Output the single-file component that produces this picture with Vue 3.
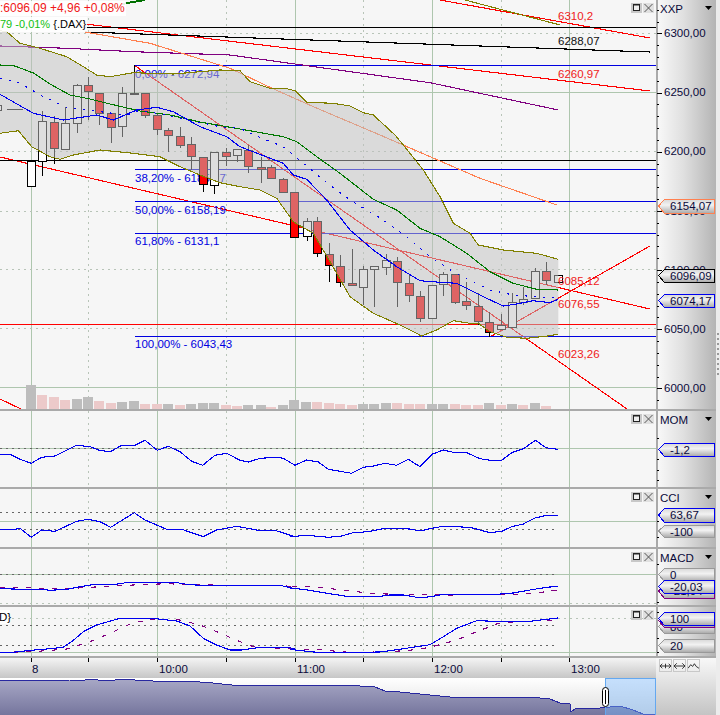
<script setup>
// crop coordinates were read at 3x, this puts them back to page pixels
function crop(ox, oy, vals) {
  const out = [];
  for (let i = 0; i < vals.length; i += 2) {
    out.push([ox + vals[i] / 3, oy + vals[i + 1] / 3]);
  }
  return out;
}
const pts = (list) => list.map((p) => p[0].toFixed(1) + ',' + p[1].toFixed(1)).join(' ');

const majorX = [31, 157, 295, 432, 569];
const minorX = [88, 226, 363, 501];

// x, body top, body bottom, wick top, wick bottom, white?
const candles = [
  [-3, 105, 110, 105, 110, 1],
  [31, 161, 186, 161, 186, 1], [42, 121, 161, 111, 176, 1], [54, 122, 148, 116, 164, 0], [65, 123, 149, 107, 149, 1],
  [77, 85, 123, 84, 133, 1], [88, 85, 91, 77, 120, 0], [99, 93, 113, 93, 125, 0], [111, 113, 127, 113, 143, 0],
  [122, 93, 126, 87, 137, 1], [134, 93, 94, 65, 94, 1], [145, 93, 115, 93, 118, 0], [157, 115, 129, 114, 135, 0],
  [168, 130, 135, 128, 152, 0], [180, 136, 145, 127, 148, 0], [191, 144, 156, 137, 170, 0], [203, 157, 184, 157, 192, 0],
  [214, 152, 185, 152, 194, 1], [226, 152, 156, 148, 166, 0], [237, 149, 155, 149, 162, 1], [248, 150, 166, 145, 173, 0],
  [261, 167, 169, 157, 183, 0], [271, 167, 178, 165, 178, 0], [283, 179, 192, 178, 193, 0], [294, 192, 237, 192, 238, 0],
  [307, 221, 236, 218, 241, 1], [317, 221, 253, 217, 257, 0], [329, 254, 265, 243, 282, 0], [340, 266, 282, 255, 287, 0],
  [352, 283, 285, 249, 285, 0], [363, 269, 287, 266, 305, 1], [374, 266, 269, 266, 307, 1], [386, 260, 267, 254, 275, 1],
  [397, 261, 282, 257, 307, 0], [409, 283, 295, 274, 302, 0], [420, 296, 318, 291, 322, 0], [432, 285, 318, 285, 319, 1],
  [443, 274, 284, 272, 296, 1], [455, 274, 302, 274, 304, 0], [466, 301, 305, 282, 310, 0], [478, 306, 321, 293, 325, 0],
  [489, 322, 332, 312, 337, 0], [501, 325, 329, 314, 329, 1], [512, 302, 327, 293, 327, 1], [523, 299, 302, 287, 305, 1],
  [535, 271, 298, 268, 298, 1], [546, 271, 280, 262, 285, 0], [558, 275, 282, 275, 282, 1],
];

// x, top, grey?
const volumes = [
  [31, 385, 1], [42, 395, 0], [54, 397, 0], [65, 400, 0], [77, 399, 1], [88, 397, 1], [99, 401, 0], [111, 403, 0],
  [122, 402, 1], [134, 401, 1], [145, 404, 0], [157, 404, 0], [168, 404, 1], [180, 405, 0], [191, 404, 1], [203, 403, 1],
  [214, 403, 1], [226, 405, 0], [237, 406, 0], [248, 405, 1], [261, 405, 1], [271, 407, 0], [283, 405, 1], [294, 400, 1],
  [306, 402, 1], [317, 402, 0], [329, 403, 0], [340, 404, 0], [352, 405, 0], [363, 404, 1], [374, 404, 1], [386, 403, 1],
  [397, 403, 0], [409, 404, 0], [420, 404, 0], [432, 404, 1], [443, 404, 1], [455, 404, 0], [466, 405, 0], [478, 405, 0],
  [489, 403, 1], [501, 405, 0], [512, 404, 1], [523, 405, 0], [535, 403, 1], [546, 406, 0],
];

const upper = [
  ...crop(0, 0, [0, 92, 20, 95, 60, 130, 120, 145, 200, 170, 250, 200, 290, 225, 330, 230, 400, 218, 520, 222, 660, 210]),
  ...crop(230, 0, [30, 212, 60, 245, 120, 265, 165, 265, 195, 272, 230, 307, 310, 310, 360, 318, 400, 338, 430, 345, 495, 405]),
  ...crop(240, 130, [490, 45, 550, 120, 600, 200, 640, 280, 690, 310]),
  ...crop(470, 230, [25, 45, 100, 60, 200, 70, 265, 88]),
];
const lower = [
  ...crop(0, 0, [0, 400, 55, 392, 95, 440, 150, 470, 180, 478, 220, 465, 300, 450, 400, 460, 480, 470, 540, 500, 600, 525, 660, 548]),
  ...crop(240, 130, [0, 170, 60, 180, 110, 205, 160, 275, 220, 310, 270, 395, 330, 500, 400, 550, 480, 585, 545, 618, 590, 600, 640, 572, 690, 580]),
  ...crop(470, 230, [25, 280, 60, 305, 110, 322, 170, 325, 240, 317, 265, 312]),
];
const bandFill = pts([...upper, ...lower.slice().reverse()]);

const greenLine = [
  ...crop(0, 0, [0, 195, 45, 198, 100, 219, 150, 252, 210, 285, 270, 297, 330, 312, 420, 333, 510, 345, 600, 366, 720, 387]),
  ...crop(240, 130, [130, 20, 170, 35, 230, 80, 300, 130, 400, 208, 470, 240, 540, 295, 600, 320, 680, 370]),
  ...crop(470, 230, [60, 125, 130, 160, 200, 178, 265, 180]),
];
const blueLine = [
  ...crop(0, 0, [0, 283, 100, 340, 190, 360, 290, 345, 340, 360, 410, 330, 470, 322, 520, 335, 600, 380, 680, 410, 720, 440]),
  ...crop(240, 130, [130, 100, 160, 135, 200, 148, 260, 210, 330, 300, 400, 360, 470, 410, 540, 452, 600, 457, 650, 460]),
  ...crop(470, 230, [50, 205, 100, 228, 140, 222, 190, 212, 240, 218, 265, 208]),
];
const blueDots = [
  ...crop(0, 0, [0, 234, 60, 249, 120, 285, 200, 322, 300, 335, 380, 345, 420, 330, 520, 350, 660, 380, 720, 385]),
  ...crop(240, 130, [30, 10, 130, 50, 190, 100, 250, 150, 330, 210, 430, 270, 500, 320, 570, 380, 640, 425]),
  ...crop(470, 230, [0, 150, 60, 180, 130, 195, 265, 205]),
];
const purpleLine = [
  ...crop(0, 0, [0, 138, 200, 145, 400, 155, 690, 165]),
  ...crop(230, 0, [0, 165, 600, 248, 985, 330]),
];
const orangeLine = [
  ...crop(0, 0, [255, 96, 450, 130]),
  ...crop(230, 0, [0, 205, 120, 262, 250, 320, 450, 405]),
  ...crop(240, 130, [720, 145]),
  [557, 205],
];

const mainLines = [
  { x1: 85, y1: 24, x2: 650, y2: 91, c: '#ff0000' },
  { x1: 0, y1: 157, x2: 650, y2: 309, c: '#ff0000' },
  { x1: 440, y1: 0, x2: 650, y2: 38, c: '#ff0000' },
  { x1: 134, y1: 65, x2: 627, y2: 409, c: '#ff0000' },
  { x1: 490, y1: 337, x2: 650, y2: 246, c: '#ff0000' },
  { x1: 0, y1: 399, x2: 21, y2: 409, c: '#ff0000' },
  { x1: 465, y1: 0, x2: 560, y2: 25, c: '#808000' },
  { x1: 85, y1: 32, x2: 650, y2: 52, c: '#000000' },
  { x1: 85, y1: 27.5, x2: 656, y2: 27.5, c: '#000000' },
  { x1: 0, y1: 160.5, x2: 656, y2: 160.5, c: '#000000' },
  { x1: 0, y1: 324.5, x2: 656, y2: 324.5, c: '#ff0000' },
  { x1: 134, y1: 65.5, x2: 656, y2: 65.5, c: '#0000e0' },
  { x1: 135, y1: 169.5, x2: 656, y2: 169.5, c: '#0000e0' },
  { x1: 135, y1: 201.5, x2: 656, y2: 201.5, c: '#0000e0' },
  { x1: 135, y1: 233.5, x2: 656, y2: 233.5, c: '#0000e0' },
  { x1: 135, y1: 336.5, x2: 656, y2: 336.5, c: '#0000e0' },
];

const fibLabels = [
  { y: 78, text: '0,00% - 6272,94' },
  { y: 182, text: '38,20% - 6185,27' },
  { y: 214, text: '50,00% - 6158,19' },
  { y: 245, text: '61,80% - 6131,1' },
  { y: 348, text: '100,00% - 6043,43' },
];
const lineLabels = [
  { y: 20, text: '6310,2', c: '#f02020' },
  { y: 45, text: '6288,07', c: '#101010' },
  { y: 78, text: '6260,97', c: '#f02020' },
  { y: 285, text: '6085,12', c: '#f02020' },
  { y: 308, text: '6076,55', c: '#f02020' },
  { y: 358, text: '6023,26', c: '#f02020' },
];

const mainTicks = [];
for (let i = 0; i < 34; i++) {
  mainTicks.push({ y: Math.round(9.8 + i * 11.83) + 0.5, major: i % 5 === 2 });
}
const mainPrices = [
  { y: 37, text: '6300,00' }, { y: 96, text: '6250,00' }, { y: 155, text: '6200,00' }, { y: 215, text: '6150,00' },
  { y: 274, text: '6100,00' }, { y: 333, text: '6050,00' }, { y: 392, text: '6000,00' },
];

const momLine = [
  ...crop(0, 380, [0, 223, 30, 223, 60, 238, 94, 250, 125, 232, 165, 228, 230, 196, 270, 200, 295, 210, 330, 216, 365, 196, 405, 196, 435, 181, 472, 211, 505, 199, 540, 215, 575, 244, 608, 256, 645, 226, 680, 220, 720, 241, 745, 246, 780, 235, 830, 232, 850, 235, 885, 256]),
  ...crop(290, 410, [14, 166, 50, 150, 85, 156, 115, 178, 150, 184, 185, 190, 220, 172, 250, 168, 285, 160, 320, 166, 355, 148, 390, 170, 428, 132, 460, 120, 495, 128, 530, 128, 570, 146, 600, 151, 635, 151, 665, 128, 700, 116, 737, 91, 767, 113, 803, 118]),
];
const cciLine = [
  ...crop(0, 480, [0, 148, 45, 148, 60, 145, 94, 172, 125, 150, 165, 154, 230, 124, 265, 118, 300, 125, 332, 142, 403, 98, 435, 120, 500, 148, 545, 148, 610, 170, 650, 150, 710, 139, 775, 151, 825, 151, 885, 170]),
  ...crop(290, 410, [0, 380, 50, 376, 115, 382, 155, 378, 190, 368, 235, 365, 285, 355, 360, 357, 390, 363, 425, 355, 460, 349, 540, 352, 600, 368, 635, 364, 665, 350, 700, 342, 735, 324, 770, 316, 803, 316]),
];
const macdLine = [
  ...crop(0, 480, [0, 326, 78, 328, 120, 328, 150, 331, 200, 328, 240, 320, 285, 313, 340, 314, 385, 307, 525, 307, 560, 313, 600, 316, 840, 316, 880, 325]),
  ...crop(290, 410, [0, 535, 40, 538, 100, 548, 170, 559, 270, 559, 300, 555, 340, 555, 380, 562, 405, 562, 430, 559, 460, 553, 620, 553, 670, 549, 720, 540, 770, 532, 803, 529]),
];
const macdSignal = [
  ...crop(0, 480, [0, 322, 100, 324, 200, 326, 300, 320, 400, 315, 500, 311, 600, 315, 840, 316, 880, 320]),
  ...crop(290, 410, [0, 529, 60, 530, 140, 538, 200, 545, 260, 551, 320, 553, 400, 553, 470, 556, 530, 553, 660, 553, 720, 551, 803, 541]),
];
const stochLine = [
  ...crop(0, 600, [0, 157, 40, 157, 80, 152, 140, 147, 190, 142, 215, 125, 250, 95, 290, 75, 360, 55, 455, 55, 530, 63, 570, 78, 610, 115, 650, 135, 690, 150, 725, 150, 780, 142, 860, 142, 885, 146]),
  ...crop(290, 410, [0, 718, 60, 725, 100, 728, 270, 726, 300, 722, 420, 704, 460, 680, 500, 655, 560, 632, 620, 634, 720, 634, 803, 624]),
];
const stochSignal = [
  ...crop(0, 600, [0, 157, 100, 155, 200, 147, 270, 125, 330, 100, 400, 68, 460, 58, 530, 58, 600, 75, 650, 95, 720, 125, 760, 140, 830, 145, 885, 147]),
  ...crop(290, 410, [0, 717, 80, 718, 150, 725, 200, 728, 350, 722, 420, 712, 500, 690, 560, 665, 620, 642, 720, 632, 803, 630]),
];

const BLUE = '#0000f0';
const PURPLE = '#800080';

const panes = [
  {
    key: 'main', title: 'XXP', top: 0, height: 409, titleY: 13,
    rules: [
      { y: 92.5, kind: 'solid', x2: 656 }, { y: 387.5, kind: 'solid', x2: 656 },
      { y: 33.5, kind: 'pale', x2: 656 }, { y: 151.5, kind: 'pale', x2: 656 }, { y: 211.5, kind: 'pale', x2: 656 },
      { y: 269.5, kind: 'pale', x2: 656 }, { y: 328.5, kind: 'pale', x2: 656 },
    ],
    series: [],
    ticks: mainTicks,
    tags: [
      { top: 199, h: 14, text: '6154,07', c: '#ff8050' },
      { top: 269, h: 13, text: '6096,09', c: '#000000' },
      { top: 294, h: 13, text: '6074,17', c: '#0000f0' },
    ],
  },
  {
    key: 'mom', title: 'MOM', top: 411, height: 76, titleY: 424,
    rules: [{ y: 448.5, kind: 'solid', x2: 656 }, { y: 448.5, kind: 'dark', x2: 558 }],
    series: [{ points: momLine, c: BLUE }],
    ticks: [{ y: 438.5 }, { y: 459.5 }, { y: 470.5 }, { y: 480.5 }],
    tags: [{ top: 443, h: 13, text: '-1,2', c: '#0000f0' }],
  },
  {
    key: 'cci', title: 'CCI', top: 489, height: 58, titleY: 502,
    rules: [{ y: 521.5, kind: 'solid', x2: 656 }, { y: 512.5, kind: 'dark', x2: 555 }, { y: 529.5, kind: 'dark', x2: 555 }],
    series: [{ points: cciLine, c: BLUE }],
    ticks: [{ y: 521.5 }, { y: 537.5 }],
    tags: [
      { top: 525, h: 12, text: '-100', c: '#999999' },
      { top: 508, h: 14, text: '63,67', c: '#0000f0' },
    ],
  },
  {
    key: 'macd', title: 'MACD', top: 549, height: 56, titleY: 562,
    rules: [{ y: 574.5, kind: 'solid', x2: 656 }, { y: 574.5, kind: 'dark', x2: 558 }, { y: 603.5, kind: 'pale', x2: 656 }],
    series: [{ points: macdSignal, c: PURPLE, dash: '5 8' }, { points: macdLine, c: BLUE }],
    ticks: [{ y: 564.5 }, { y: 602.5 }],
    tags: [
      { top: 568, h: 13, text: '0', c: '#999999' },
      { top: 584, h: 14, text: '-21,04', c: '#800080' },
      { top: 580, h: 13, text: '-20,03', c: '#0000f0' },
    ],
  },
  {
    key: 'stoch', title: '', top: 607, height: 49, titleY: 0,
    rules: [
      { y: 618.5, kind: 'pale', x2: 656 }, { y: 625.5, kind: 'dark', x2: 555 }, { y: 645.5, kind: 'dark', x2: 555 },
      { y: 652.5, kind: 'solid', x2: 656 },
    ],
    series: [{ points: stochSignal, c: PURPLE, dash: '5 8' }, { points: stochLine, c: BLUE }],
    ticks: [{ y: 612.5 }, { y: 638.5 }, { y: 652.5 }],
    tags: [
      { top: 620, h: 13, text: '80', c: '#999999' },
      { top: 639, h: 13, text: '20', c: '#999999' },
      { top: 614, h: 13, text: '', c: '#800080' },
      { top: 612, h: 13, text: '100', c: '#0000f0' },
    ],
  },
];

function tagShape(tag) {
  const b = tag.top + tag.h;
  const m = tag.top + tag.h / 2;
  return `658.5,${m} 664.5,${tag.top + 0.5} 714.5,${tag.top + 0.5} 714.5,${b + 0.5} 664.5,${b + 0.5}`;
}

const timeTicks = [
  { x: 31, label: '8', lx: 32 }, { x: 88 }, { x: 157, label: '10:00', lx: 159 }, { x: 226 },
  { x: 295, label: '11:00', lx: 297 }, { x: 363 }, { x: 432, label: '12:00', lx: 434 }, { x: 501 },
  { x: 569, label: '13:00', lx: 571 },
];

const navTrend = [
  [0, 679], [20, 680], [27, 679], [35, 680], [70, 679], [85, 679], [88, 678], [108, 680], [122, 678], [135, 679], [153, 680],
  [190, 680], [200, 681], [213, 682], [222, 683], [232, 684], [262, 685], [278, 684], [300, 684], [325, 685], [345, 684],
  [375, 686], [385, 690], [400, 691], [420, 693], [450, 696], [480, 697], [510, 696], [540, 697], [550, 698], [560, 702],
  [570, 703], [571, 711], [576, 707], [600, 707], [620, 705], [633, 709], [643, 713], [656, 714],
];
const navArea = pts([...navTrend, [656, 715], [0, 715]]);
</script>

<template>
  <div class="station">
    <div class="workspace">
      <div v-for="pane in panes" :key="pane.key" class="row">
        <div class="pane" :style="{ height: pane.height + 'px' }">
          <svg class="plot" width="656" :height="pane.height" :viewBox="`0 ${pane.top} 656 ${pane.height}`">
            <g shape-rendering="crispEdges" fill="none">
              <line v-for="x in majorX" :key="x" :x1="x + 0.5" :x2="x + 0.5" :y1="pane.top" :y2="pane.top + pane.height" stroke="#aec6ae" />
              <line v-for="x in minorX" :key="x" :x1="x + 0.5" :x2="x + 0.5" :y1="pane.top" :y2="pane.top + pane.height" stroke="#b8c4b8" stroke-dasharray="2 4" />
              <template v-for="r in pane.rules" :key="r.kind + r.y">
                <line :x1="0" :x2="r.x2" :y1="r.y" :y2="r.y" :class="'rule-' + r.kind" />
              </template>
            </g>

            <template v-if="pane.key === 'main'">
              <g shape-rendering="crispEdges">
                <rect v-for="v in volumes" :key="v[0]" :x="v[0] - 5" :y="v[1]" width="10" :height="409 - v[1]" :fill="v[2] ? '#bdbdbd' : '#eccaca'" />
              </g>
              <g shape-rendering="crispEdges" fill="none" stroke-width="1.1">
                <line v-for="(l, i) in mainLines" :key="i" :x1="l.x1" :y1="l.y1" :x2="l.x2" :y2="l.y2" :stroke="l.c" />
                <polyline :points="pts(purpleLine)" stroke="#800080" />
                <polyline :points="pts(orangeLine)" stroke="#ff8050" />
                <polyline points="122,4 133,2 145,0" stroke="#007000" stroke-width="2" />
                <line x1="7" y1="109.5" x2="24" y2="109.5" stroke="#000" stroke-dasharray="16 2" />
              </g>
              <text v-for="f in fibLabels" :key="f.y" x="135" :y="f.y" class="txt" fill="#0000e0">{{ f.text }}</text>
              <g shape-rendering="crispEdges">
                <template v-for="c in candles" :key="c[0]">
                  <line :x1="c[0] + 0.5" :x2="c[0] + 0.5" :y1="c[3]" :y2="c[4]" stroke="#000" />
                  <rect :x="c[0] - 3.5" :y="c[1] + 0.5" width="8" :height="c[2] - c[1]" :fill="c[5] ? '#fff' : '#ff0000'" stroke="#000" />
                </template>
              </g>
              <polygon :points="bandFill" fill="rgb(192,192,192)" fill-opacity="0.52" />
              <g shape-rendering="crispEdges" fill="none" stroke-width="1.1">
                <polyline :points="pts(upper)" stroke="#808000" />
                <polyline :points="pts(lower)" stroke="#808000" />
                <polyline :points="pts(greenLine)" stroke="#007800" />
                <polyline :points="pts(blueDots)" stroke="#0000f0" stroke-dasharray="2 7" />
                <polyline :points="pts(blueLine)" stroke="#0000f0" />
              </g>
              <text v-for="l in lineLabels" :key="l.y" x="558" :y="l.y" class="txt" :fill="l.c">{{ l.text }}</text>
            </template>

            <g v-else shape-rendering="crispEdges" fill="none" stroke-width="1.1">
              <polyline v-for="(s, i) in pane.series" :key="i" :points="pts(s.points)" :stroke="s.c" :stroke-dasharray="s.dash" />
            </g>

            <template v-if="pane.key === 'stoch'">
              <rect x="0" y="610" width="10" height="14" fill="#fff" />
              <text x="-1" y="621" class="txt" fill="#000">D}</text>
            </template>
          </svg>

          <div v-if="pane.key === 'main'" class="legend">
            <div class="legend-line red">:6096,09 +4,96 +0,08%</div>
            <div class="legend-line second"><span class="green">79 -0,01%</span> {.DAX}</div>
          </div>

          <div class="win-btns">
            <span class="win-btn">
              <svg width="11" height="10" viewBox="0 0 11 10"><rect x="2.5" y="1.5" width="6" height="6" fill="#eee" stroke="#222" /><line x1="2" x2="9" y1="2" y2="2" stroke="#222" /></svg>
            </span>
            <span class="win-btn light">
              <svg width="11" height="10" viewBox="0 0 11 10"><path d="M1.5 1 L9.5 9 M9.5 1 L1.5 9" stroke="#555" fill="none" /></svg>
            </span>
          </div>
        </div>

        <div class="axis">
          <svg width="60" :height="pane.height" :viewBox="`656 ${pane.top} 60 ${pane.height}`">
            <defs v-if="pane.key === 'main'">
              <linearGradient id="tagFill" x1="0" y1="0" x2="0" y2="1">
                <stop offset="0" stop-color="#d8d8d8" />
                <stop offset="0.4" stop-color="#f2f2f2" />
                <stop offset="1" stop-color="#a8a8a8" />
              </linearGradient>
            </defs>
            <g shape-rendering="crispEdges">
              <line v-for="t in pane.ticks" :key="t.y" x1="657" :x2="t.major ? 662 : 659" :y1="t.y" :y2="t.y" stroke="#000" />
            </g>
            <template v-if="pane.key === 'main'">
              <text v-for="p in mainPrices" :key="p.y" x="664" :y="p.y" class="txt price">{{ p.text }}</text>
            </template>
            <template v-for="tag in pane.tags" :key="tag.c + tag.top">
              <polygon :points="tagShape(tag)" fill="url(#tagFill)" :stroke="tag.c" shape-rendering="crispEdges" />
              <text x="670" :y="tag.top + 11" class="txt price">{{ tag.text }}</text>
            </template>
            <text v-if="pane.title" x="660" :y="pane.titleY" class="txt price">{{ pane.title }}</text>
            <path v-if="pane.title" :d="`M705 ${pane.titleY - 7} h7 l-3.5 4 z`" fill="#000" />
          </svg>
        </div>
      </div>

      <div class="bottom">
        <div class="bottom-left">
          <div class="time-row">
            <svg width="656" height="20" viewBox="0 657 656 20">
              <g shape-rendering="crispEdges">
                <line v-for="t in timeTicks" :key="t.x" :x1="t.x + 0.5" :x2="t.x + 0.5" y1="657" y2="661" stroke="#000" />
              </g>
              <template v-for="t in timeTicks" :key="t.x">
                <text v-if="t.label" :x="t.lx" y="672" class="txt price">{{ t.label }}</text>
              </template>
            </svg>
          </div>
          <div class="nav-row">
            <svg width="656" height="38" viewBox="0 677 656 38">
              <defs>
                <linearGradient id="navFill" x1="0" y1="0" x2="0" y2="1">
                  <stop offset="0" stop-color="#a8a8c6" />
                  <stop offset="1" stop-color="#74749c" />
                </linearGradient>
              </defs>
              <polygon :points="navArea" fill="url(#navFill)" />
              <polyline :points="pts(navTrend)" fill="none" stroke="#2828a0" shape-rendering="crispEdges" />
              <line x1="0" x2="656" y1="714.5" y2="714.5" stroke="#000088" shape-rendering="crispEdges" />
              <rect x="605.5" y="677.5" width="50" height="37" fill="#78b4fa" fill-opacity="0.42" stroke="#64a8f0" shape-rendering="crispEdges" />
              <rect x="602.5" y="686.5" width="6" height="19" rx="3" fill="#fff" stroke="#000" />
              <line x1="605.5" x2="605.5" y1="689" y2="703" stroke="#000" shape-rendering="crispEdges" />
            </svg>
          </div>
        </div>
        <div class="tools">
          <span class="tool">
            <svg width="12" height="11" viewBox="0 0 12 11" fill="none" stroke="#222"><path d="M0 5.5 H12 M2.5 3 L0 5.5 L2.5 8 M9.5 3 L12 5.5 L9.5 8 M6 3 V8" /></svg>
          </span>
          <span class="tool">
            <svg width="12" height="11" viewBox="0 0 12 11" fill="none" stroke="#222"><path d="M0 5.5 H12 M3 2.5 L0 5.5 L3 8.5 M9 2.5 L12 5.5 L9 8.5" /></svg>
          </span>
          <span class="tool">
            <svg width="12" height="11" viewBox="0 0 12 11" fill="none" stroke="#222"><path d="M0 8 L3 4 L5 6 L7 3 L9 6 L12 8" /></svg>
          </span>
        </div>
      </div>
    </div>

    <div class="grip">
      <i v-for="n in 9" :key="n"></i>
    </div>
  </div>
</template>

<style scoped>
.station {
  display: flex;
  width: 720px;
  height: 715px;
  overflow: hidden;
  background: #f6f6f6;
  font-family: "Liberation Sans", Arial, sans-serif;
}

.workspace {
  display: flex;
  flex-direction: column;
  width: 716px;
  flex: none;
}

.row {
  display: flex;
  border-bottom: 2px solid #aaa;
  flex: none;
}

.pane {
  position: relative;
  width: 656px;
  flex: none;
  background: #f6f6f6;
}

.plot {
  display: block;
}

.axis {
  flex: 1;
  box-shadow: inset 2px 0 0 #aaa;
  background: linear-gradient(to right, #fafafa, #e0e0e0 45%, #b4b4b4);
}

.axis svg {
  display: block;
}

.txt {
  font-family: "Liberation Sans", Arial, sans-serif;
  font-size: 11.5px;
}

.price {
  fill: #0a0a3a;
}

.rule-solid {
  stroke: #aec6ae;
}

.rule-pale {
  stroke: #b8c4b8;
  stroke-dasharray: 2 4;
}

.rule-dark {
  stroke: #666;
  stroke-dasharray: 2 4;
}

.legend {
  position: absolute;
  top: 1px;
  left: 0;
  font-size: 12px;
  line-height: 15px;
  white-space: nowrap;
}

.legend-line {
  width: fit-content;
  padding-right: 1px;
  background: rgba(255, 255, 255, 0.9);
  color: #000;
}

.legend-line.second {
  margin-top: 1px;
  font-size: 11px;
}

.red {
  color: #f01818;
}

.green {
  color: #10c010;
}

.win-btns {
  position: absolute;
  top: 3px;
  right: 2px;
  display: flex;
  gap: 1px;
}

.win-btn {
  display: flex;
  align-items: center;
  justify-content: center;
  width: 11px;
  height: 10px;
  background: #c8c8c8;
}

.win-btn.light {
  background: #e0e0e0;
}

.bottom {
  display: flex;
  flex: 1;
  min-height: 0;
}

.bottom-left {
  width: 656px;
  flex: none;
}

.time-row {
  height: 20px;
  background: linear-gradient(to bottom, #f4f4f4, #c6c6c6);
}

.nav-row {
  height: 38px;
  background: linear-gradient(to bottom, #ffffff, #dcdcdc);
}

.time-row svg,
.nav-row svg {
  display: block;
}

.tools {
  flex: 1;
  display: flex;
  align-items: flex-start;
  gap: 1px;
  padding: 1px 0 0 3px;
  background: linear-gradient(to bottom, #f8f8f8, #c4c4c4);
}

.tool {
  display: flex;
  align-items: center;
  justify-content: center;
  width: 13px;
  height: 13px;
  border: 1px solid #c8c8c8;
  box-sizing: border-box;
}

.tool svg {
  width: 11px;
  height: 10px;
}

.grip {
  flex: 1;
  display: flex;
  flex-direction: column;
  gap: 3px;
  padding: 333px 0 0 1px;
  background: #ececec;
}

.grip i {
  display: block;
  width: 2px;
  height: 2px;
  background: #999;
}
</style>
